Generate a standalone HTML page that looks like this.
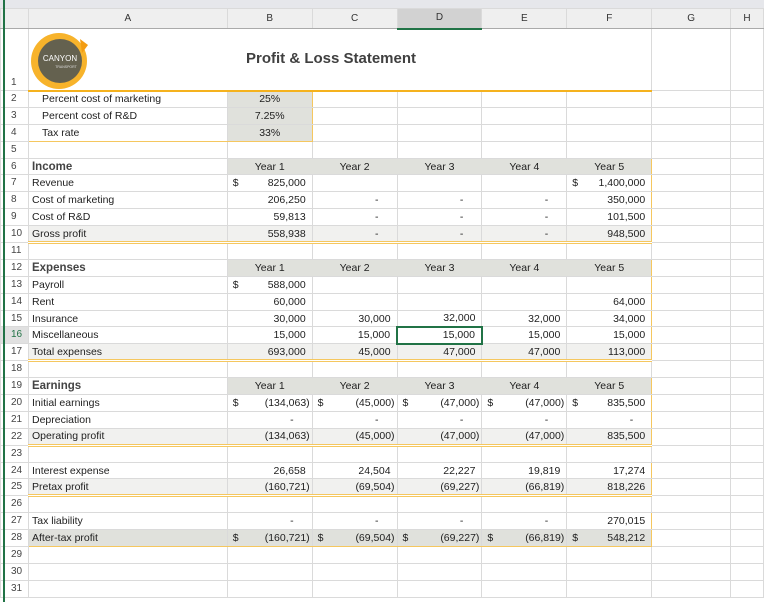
<!DOCTYPE html>
<html><head><meta charset="utf-8"><style>
*{margin:0;padding:0;box-sizing:border-box}
body{width:764px;height:602px;overflow:hidden;background:#fff;font-family:"Liberation Sans",sans-serif;font-size:10.5px;color:#1e1e1e;position:relative}
.top{position:absolute;left:0;top:0;width:764px;height:8px;background:#e6e7eb}
.gl{position:absolute;left:3px;top:0;width:2px;height:602px;background:#217346;z-index:5}
table{position:absolute;left:0;top:8px;border-collapse:collapse;table-layout:fixed}
td{border:1px solid #dadada;height:16.9px;white-space:nowrap;overflow:hidden;padding:0 3px;line-height:14px}
tr.h td{height:20px;background:#efefef;text-align:center;color:#333;font-size:10px;border-bottom:1px solid #aaa}
td.r{background:#fff;color:#444;text-align:left;padding-left:10px;border-color:#dadada;font-size:10px}
td.n{text-align:right;padding-right:6px}
td.ng{text-align:right;padding-right:2px}
td.ds{text-align:right;padding-right:18px}
.d{float:left;padding-left:2px}
td.y{text-align:center;background:#e0e1dc;border-left-color:#e0e1dc;border-right-color:#e0e1dc}
td.g{background:#f1f1ef}
td.gd{background:#e0e1dc}
td.sh{font-weight:bold;font-size:11.5px;color:#444}
td.ind{padding-left:13px}
td.ot{border-top:1px solid #f5c75f}
td.ob{border-bottom:3px double #f5c75f}
td.obs{border-bottom:1px solid #f5c75f}
td.or{border-right:1px solid #f5c75f}
</style></head><body>
<div class="top"></div><div class="gl"></div>
<table>
<colgroup><col style="width:28px"><col style="width:199px"><col style="width:85px"><col style="width:85px"><col style="width:85px"><col style="width:85px"><col style="width:85px"><col style="width:79px"><col style="width:33px"></colgroup>
<tr class="h"><td></td><td>A</td><td>B</td><td>C</td><td style="background:#d2d2d2;border-bottom:2px solid #217346">D</td><td>E</td><td>F</td><td>G</td><td>H</td></tr>
<tr style="height:62px"><td class="r" style="vertical-align:bottom">1</td><td colspan="6" style="height:62px;border-bottom:2px solid #f5b21e;position:relative">
<svg style="position:absolute;left:1px;top:1px" width="60" height="60" viewBox="0 0 60 60"><circle cx="29" cy="30" r="28" fill="#f7b32b"/><polygon points="50,8 58,14 52,22" fill="#f39c12"/><circle cx="30" cy="30" r="22" fill="#64614f"/><text x="30" y="30" font-family="Liberation Sans" font-size="8" fill="#fff" text-anchor="middle">CANYON</text><text x="36" y="37" font-family="Liberation Sans" font-size="3.5" fill="#ddd" text-anchor="middle">TRANSPORT</text></svg>
<div style="position:absolute;left:217px;top:22px;font-weight:bold;font-size:15px;color:#404040">Profit &amp; Loss Statement</div></td><td></td><td></td></tr>
<tr><td class="r">2</td><td class="ind">Percent cost of marketing</td><td class="y" style="border-right-color:#f5c75f">25%</td><td></td><td></td><td></td><td></td><td></td><td></td></tr>
<tr><td class="r">3</td><td class="ind">Percent cost of R&amp;D</td><td class="y" style="border-right-color:#f5c75f">7.25%</td><td></td><td></td><td></td><td></td><td></td><td></td></tr>
<tr><td class="r">4</td><td class="ind obs">Tax rate</td><td class="y obs" style="border-right-color:#f5c75f">33%</td><td></td><td></td><td></td><td></td><td></td><td></td></tr>
<tr><td class="r">5</td><td></td><td></td><td></td><td></td><td></td><td></td><td></td><td></td></tr>
<tr><td class="r">6</td><td class="sh ot">Income</td><td class="y ot">Year 1</td><td class="y ot">Year 2</td><td class="y ot">Year 3</td><td class="y ot">Year 4</td><td class="y ot" style="border-right-color:#f5c75f">Year 5</td><td></td><td></td></tr>
<tr><td class="r">7</td><td>Revenue</td><td class="n"><span class="d">$</span>825,000</td><td></td><td></td><td></td><td class="n or"><span class="d">$</span>1,400,000</td><td></td><td></td></tr>
<tr><td class="r">8</td><td>Cost of marketing</td><td class="n">206,250</td><td class="ds">-</td><td class="ds">-</td><td class="ds">-</td><td class="n or">350,000</td><td></td><td></td></tr>
<tr><td class="r">9</td><td>Cost of R&amp;D</td><td class="n">59,813</td><td class="ds">-</td><td class="ds">-</td><td class="ds">-</td><td class="n or">101,500</td><td></td><td></td></tr>
<tr><td class="r">10</td><td class="g ob">Gross profit</td><td class="n g ob">558,938</td><td class="ds g ob">-</td><td class="ds g ob">-</td><td class="ds g ob">-</td><td class="n g ob or">948,500</td><td></td><td></td></tr>
<tr><td class="r">11</td><td></td><td></td><td></td><td></td><td></td><td></td><td></td><td></td></tr>
<tr><td class="r">12</td><td class="sh ot">Expenses</td><td class="y ot">Year 1</td><td class="y ot">Year 2</td><td class="y ot">Year 3</td><td class="y ot">Year 4</td><td class="y ot" style="border-right-color:#f5c75f">Year 5</td><td></td><td></td></tr>
<tr><td class="r">13</td><td>Payroll</td><td class="n"><span class="d">$</span>588,000</td><td></td><td></td><td></td><td class="or"></td><td></td><td></td></tr>
<tr><td class="r">14</td><td>Rent</td><td class="n">60,000</td><td></td><td></td><td></td><td class="n or">64,000</td><td></td><td></td></tr>
<tr><td class="r">15</td><td>Insurance</td><td class="n">30,000</td><td class="n">30,000</td><td class="n">32,000</td><td class="n">32,000</td><td class="n or">34,000</td><td></td><td></td></tr>
<tr><td class="r" style="color:#217346;background:#e1e1e1">16</td><td>Miscellaneous</td><td class="n">15,000</td><td class="n">15,000</td><td class="n" style="border:2px solid #217346">15,000</td><td class="n">15,000</td><td class="n or">15,000</td><td></td><td></td></tr>
<tr><td class="r">17</td><td class="g ob">Total expenses</td><td class="n g ob">693,000</td><td class="n g ob">45,000</td><td class="n g ob">47,000</td><td class="n g ob">47,000</td><td class="n g ob or">113,000</td><td></td><td></td></tr>
<tr><td class="r">18</td><td></td><td></td><td></td><td></td><td></td><td></td><td></td><td></td></tr>
<tr><td class="r">19</td><td class="sh ot">Earnings</td><td class="y ot">Year 1</td><td class="y ot">Year 2</td><td class="y ot">Year 3</td><td class="y ot">Year 4</td><td class="y ot" style="border-right-color:#f5c75f">Year 5</td><td></td><td></td></tr>
<tr><td class="r">20</td><td>Initial earnings</td><td class="ng"><span class="d">$</span>(134,063)</td><td class="ng"><span class="d">$</span>(45,000)</td><td class="ng"><span class="d">$</span>(47,000)</td><td class="ng"><span class="d">$</span>(47,000)</td><td class="n or"><span class="d">$</span>835,500</td><td></td><td></td></tr>
<tr><td class="r">21</td><td>Depreciation</td><td class="ds">-</td><td class="ds">-</td><td class="ds">-</td><td class="ds">-</td><td class="ds or">-</td><td></td><td></td></tr>
<tr><td class="r">22</td><td class="g ob">Operating profit</td><td class="ng g ob">(134,063)</td><td class="ng g ob">(45,000)</td><td class="ng g ob">(47,000)</td><td class="ng g ob">(47,000)</td><td class="n g ob or">835,500</td><td></td><td></td></tr>
<tr><td class="r">23</td><td></td><td></td><td></td><td></td><td></td><td></td><td></td><td></td></tr>
<tr><td class="r">24</td><td class="ot">Interest expense</td><td class="n ot">26,658</td><td class="n ot">24,504</td><td class="n ot">22,227</td><td class="n ot">19,819</td><td class="n ot or">17,274</td><td></td><td></td></tr>
<tr><td class="r">25</td><td class="g ob">Pretax profit</td><td class="ng g ob">(160,721)</td><td class="ng g ob">(69,504)</td><td class="ng g ob">(69,227)</td><td class="ng g ob">(66,819)</td><td class="n g ob or">818,226</td><td></td><td></td></tr>
<tr><td class="r">26</td><td></td><td></td><td></td><td></td><td></td><td></td><td></td><td></td></tr>
<tr><td class="r">27</td><td class="ot">Tax liability</td><td class="ds ot">-</td><td class="ds ot">-</td><td class="ds ot">-</td><td class="ds ot">-</td><td class="n ot or">270,015</td><td></td><td></td></tr>
<tr><td class="r">28</td><td class="gd obs">After-tax profit</td><td class="ng gd obs"><span class="d">$</span>(160,721)</td><td class="ng gd obs"><span class="d">$</span>(69,504)</td><td class="ng gd obs"><span class="d">$</span>(69,227)</td><td class="ng gd obs"><span class="d">$</span>(66,819)</td><td class="n gd obs or"><span class="d">$</span>548,212</td><td></td><td></td></tr>
<tr><td class="r">29</td><td></td><td></td><td></td><td></td><td></td><td></td><td></td><td></td></tr>
<tr><td class="r">30</td><td></td><td></td><td></td><td></td><td></td><td></td><td></td><td></td></tr>
<tr><td class="r">31</td><td></td><td></td><td></td><td></td><td></td><td></td><td></td><td></td></tr>
</table>
</body></html>
